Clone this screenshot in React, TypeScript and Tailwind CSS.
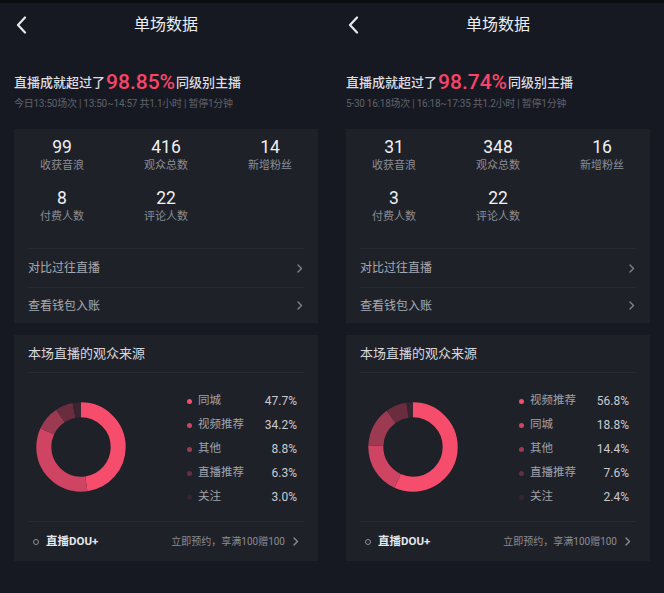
import React from 'react';

const FONT = { fontFamily: 'Roboto, "Noto Sans CJK SC", sans-serif' };

interface Source {
  label: string;
  value: number;
}

interface PanelData {
  rank: string;
  meta: string;
  stats: { value: string; label: string }[];
  sources: Source[];
}

const SEGMENT_COLORS = ['#f74d6c', '#cf4462', '#9c3a52', '#6a2d3f', '#3a2431'];

const panels: PanelData[] = [
  {
    rank: '98.85%',
    meta: '今日13:50场次 | 13:50~14:57 共1.1小时 | 暂停1分钟',
    stats: [
      { value: '99', label: '收获音浪' },
      { value: '416', label: '观众总数' },
      { value: '14', label: '新增粉丝' },
      { value: '8', label: '付费人数' },
      { value: '22', label: '评论人数' },
    ],
    sources: [
      { label: '同城', value: 47.7 },
      { label: '视频推荐', value: 34.2 },
      { label: '其他', value: 8.8 },
      { label: '直播推荐', value: 6.3 },
      { label: '关注', value: 3.0 },
    ],
  },
  {
    rank: '98.74%',
    meta: '5-30 16:18场次 | 16:18~17:35 共1.2小时 | 暂停1分钟',
    stats: [
      { value: '31', label: '收获音浪' },
      { value: '348', label: '观众总数' },
      { value: '16', label: '新增粉丝' },
      { value: '3', label: '付费人数' },
      { value: '22', label: '评论人数' },
    ],
    sources: [
      { label: '视频推荐', value: 56.8 },
      { label: '同城', value: 18.8 },
      { label: '其他', value: 14.4 },
      { label: '直播推荐', value: 7.6 },
      { label: '关注', value: 2.4 },
    ],
  },
];

const Chevron = ({ className = '' }: { className?: string }) => (
  <svg width="6" height="9" viewBox="0 0 6 9" className={className}>
    <path d="M1 1l3.5 3.5L1 8" fill="none" stroke="currentColor" strokeWidth="1.4" strokeLinecap="round" strokeLinejoin="round" />
  </svg>
);

const Donut = ({ sources }: { sources: Source[] }) => {
  let offset = 0;
  return (
    <svg width="90" height="90" viewBox="0 0 90 90" className="-rotate-90">
      {sources.map((s, i) => {
        const circle = (
          <circle
            key={s.label}
            cx="45"
            cy="45"
            r="37.2"
            fill="none"
            stroke={SEGMENT_COLORS[i]}
            strokeWidth="15"
            pathLength={100}
            strokeDasharray={`${s.value} ${100 - s.value}`}
            strokeDashoffset={-offset}
          />
        );
        offset += s.value;
        return circle;
      })}
    </svg>
  );
};

const Panel = ({ data }: { data: PanelData }) => (
  <div className="w-[332px] h-full flex flex-col bg-[#171922]">
    <div className="h-[3px] bg-[#0c0d11]" />

    {/* Header */}
    <div className="relative h-[44px] flex items-center justify-center">
      <svg width="11" height="18" viewBox="0 0 11 18" className="absolute left-[16px] top-[13px] text-[#e8e9ec]">
        <path d="M9 1.5L2 9l7 7.5" fill="none" stroke="currentColor" strokeWidth="2.2" strokeLinecap="round" strokeLinejoin="round" />
      </svg>
      <span className="text-[16px] text-[#eceef1]">单场数据</span>
    </div>

    {/* Headline */}
    <div className="mt-[24px] px-[14px] h-[24px] flex items-center font-medium text-[13px] text-[#dcdde1]">
      直播成就超过了
      <span className="text-[21px] text-[#f7456a] mx-[1px]">{data.rank}</span>
      同级别主播
    </div>
    <div className="mt-[1px] px-[14px] text-[10px] tracking-[-0.25px] leading-[16px] text-[#5f626b]">{data.meta}</div>

    {/* Stats card */}
    <div className="mt-[17px] mx-[14px] h-[194px] bg-[#1f2129] flex flex-col">
      <div className="grid grid-cols-[96px_112px_96px] gap-y-[14px] pt-[8px]">
        {data.stats.map((s) => (
          <div key={s.label} className="flex flex-col items-center">
            <span className="text-[17.5px] leading-[20px] text-[#eef0f2]">{s.value}</span>
            <span className="mt-[1px] text-[11px] leading-[16px] text-[#8a8d95]">{s.label}</span>
          </div>
        ))}
      </div>
      <div className="mt-[23px] mx-[14px] border-t border-[#272a33]" />
      <div className="h-[38px] px-[14px] flex items-center justify-between text-[12px] text-[#a6a9b0]">
        <span>对比过往直播</span>
        <Chevron className="text-[#80838b] mr-[1px]" />
      </div>
      <div className="mx-[14px] border-t border-[#272a33]" />
      <div className="flex-1 px-[14px] flex items-center justify-between text-[12px] text-[#a6a9b0]">
        <span>查看钱包入账</span>
        <Chevron className="text-[#80838b] mr-[1px]" />
      </div>
    </div>

    {/* Audience source card */}
    <div className="mt-[12px] mx-[14px] h-[226px] bg-[#1f2129] flex flex-col">
      <div className="h-[37px] px-[14px] flex items-center text-[13px] text-[#d6d8dc]">本场直播的观众来源</div>
      <div className="mx-[14px] border-t border-[#272a33]" />
      <div className="h-[148px] flex items-center">
        <div className="ml-[22px]">
          <Donut sources={data.sources} />
        </div>
        <div className="ml-[61px] w-[110px] pt-[4px] flex flex-col">
          {data.sources.map((s, i) => (
            <div key={s.label} className="h-[24px] flex items-center">
              <span className="w-[5px] h-[5px] rounded-full" style={{ backgroundColor: SEGMENT_COLORS[i] }} />
              <span className="ml-[6px] text-[11.5px] text-[#9fa2aa]">{s.label}</span>
              <span className="ml-auto text-[12px] text-[#c9cbd0]">{s.value.toFixed(1)}%</span>
            </div>
          ))}
        </div>
      </div>
      <div className="mx-[14px] border-t border-[#272a33]" />
      <div className="flex-1 px-[19px] flex items-center">
        <span className="w-[6px] h-[6px] rounded-full border-[1.5px] border-[#8e9199]" />
        <span className="ml-[7px] text-[11.5px] font-bold text-[#e4e6e9]">直播DOU+</span>
        <span className="ml-auto text-[10px] text-[#8a8d95]">立即预约，享满100赠100</span>
        <Chevron className="ml-[8px] text-[#8a8d95]" />
      </div>
    </div>
  </div>
);

export default function App() {
  return (
    <div className="w-[664px] h-[593px] flex bg-[#171922]" style={FONT}>
      {panels.map((p, i) => (
        <Panel key={i} data={p} />
      ))}
    </div>
  );
}
